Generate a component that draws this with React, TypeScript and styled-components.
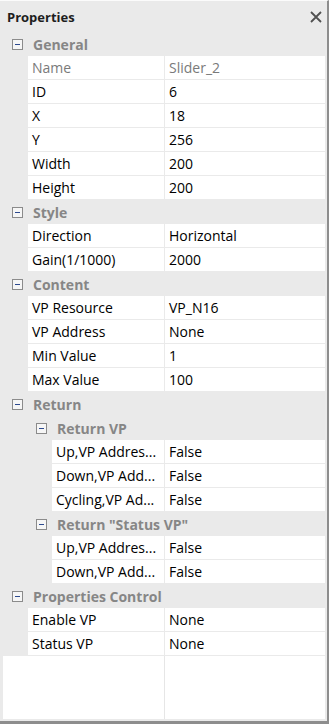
import React from 'react';
import styled, { createGlobalStyle } from 'styled-components';

const GlobalStyle = createGlobalStyle`
  html, body {
    margin: 0;
    padding: 0;
    background: #eaeaea;
  }
  * {
    box-sizing: border-box;
  }
`;

const FONT = `"Open Sans", "Noto Sans", "DejaVu Sans", sans-serif`;

const Panel = styled.div`
  width: 329px;
  height: 724px;
  display: flex;
  flex-direction: column;
  background: #eaeaea;
  border-top: 1px solid #fbfbfb;
  border-right: 2px solid #8d8d8d;
  border-bottom: 3px solid #8d8d8d;
  font-family: ${FONT};
  overflow: hidden;
`;

const TitleBar = styled.div`
  height: 31px;
  flex: none;
  display: flex;
  align-items: center;
  justify-content: space-between;
  padding: 0 3px 0 7px;
`;

const Title = styled.span`
  font-size: 13px;
  font-weight: 700;
  color: #1e1e1e;
`;

const CloseButton = styled.button`
  width: 16px;
  height: 16px;
  padding: 0;
  border: none;
  background: none;
  display: flex;
  align-items: center;
  justify-content: center;
`;

const Grid = styled.div`
  flex: 1;
  display: flex;
  flex-direction: column;
  margin: 0 2px 2px 3px;
  background: #ffffff;
`;

const CategoryRow = styled.div<{ $indent: number }>`
  height: 24px;
  flex: none;
  display: flex;
  align-items: center;
  gap: 10px;
  padding-left: ${({ $indent }) => $indent}px;
  background: #eaeaea;
  font-size: 14px;
  font-weight: 700;
  color: #868686;
  white-space: nowrap;
`;

const Toggle = styled.span`
  width: 11px;
  height: 11px;
  flex: none;
  border: 1px solid #8b8b8b;
  background: #f6f6f6;
  display: flex;
  align-items: center;
  justify-content: center;

  &::after {
    content: '';
    width: 5px;
    height: 1px;
    background: #2d4a8f;
  }
`;

const PropRow = styled.div<{ $indent: number }>`
  height: 24px;
  flex: none;
  display: flex;
  gap: 1px;
  padding-left: ${({ $indent }) => $indent}px;
  padding-bottom: 1px;
  background: #eaeaea;
`;

const Cell = styled.div<{ $muted?: boolean }>`
  background: #ffffff;
  display: flex;
  align-items: center;
  padding-left: 4px;
  font-size: 14px;
  color: ${({ $muted }) => ($muted ? '#7a7a7a' : '#000000')};
  white-space: nowrap;
  overflow: hidden;
`;

const LabelCell = styled(Cell)`
  flex: 1;
  min-width: 0;
`;

const ValueCell = styled(Cell)`
  width: 160px;
  flex: none;
`;

const Filler = styled.div`
  flex: 1;
  display: flex;
`;

const FillerLabel = styled.div`
  width: 162px;
  border-right: 1px solid #e6e6e6;
`;

type Prop = { label: string; value: string; muted?: boolean };
type Section = { title: string; level: number; props?: Prop[]; children?: Section[] };

const sections: Section[] = [
  {
    title: 'General',
    level: 0,
    props: [
      { label: 'Name', value: 'Slider_2', muted: true },
      { label: 'ID', value: '6' },
      { label: 'X', value: '18' },
      { label: 'Y', value: '256' },
      { label: 'Width', value: '200' },
      { label: 'Height', value: '200' },
    ],
  },
  {
    title: 'Style',
    level: 0,
    props: [
      { label: 'Direction', value: 'Horizontal' },
      { label: 'Gain(1/1000)', value: '2000' },
    ],
  },
  {
    title: 'Content',
    level: 0,
    props: [
      { label: 'VP Resource', value: 'VP_N16' },
      { label: 'VP Address', value: 'None' },
      { label: 'Min Value', value: '1' },
      { label: 'Max Value', value: '100' },
    ],
  },
  {
    title: 'Return',
    level: 0,
    children: [
      {
        title: 'Return VP',
        level: 1,
        props: [
          { label: 'Up,VP Addres...', value: 'False' },
          { label: 'Down,VP Add...', value: 'False' },
          { label: 'Cycling,VP Ad...', value: 'False' },
        ],
      },
      {
        title: 'Return "Status VP"',
        level: 1,
        props: [
          { label: 'Up,VP Addres...', value: 'False' },
          { label: 'Down,VP Add...', value: 'False' },
        ],
      },
    ],
  },
  {
    title: 'Properties Control',
    level: 0,
    props: [
      { label: 'Enable VP', value: 'None' },
      { label: 'Status VP', value: 'None' },
    ],
  },
];

const renderSection = (s: Section): React.ReactNode => (
  <React.Fragment key={s.title}>
    <CategoryRow $indent={9 + s.level * 24}>
      <Toggle />
      {s.title}
    </CategoryRow>
    {s.props?.map((p, i) => (
      <PropRow key={i} $indent={25 + s.level * 24}>
        <LabelCell $muted={p.muted}>{p.label}</LabelCell>
        <ValueCell $muted={p.muted}>{p.value}</ValueCell>
      </PropRow>
    ))}
    {s.children?.map(renderSection)}
  </React.Fragment>
);

export default function App() {
  return (
    <>
      <GlobalStyle />
      <Panel>
        <TitleBar>
          <Title>Properties</Title>
          <CloseButton aria-label="Close">
            <svg width="12" height="12" viewBox="0 0 12 12">
              <path d="M1 1 L11 11 M11 1 L1 11" stroke="#505050" strokeWidth="1.8" />
            </svg>
          </CloseButton>
        </TitleBar>
        <Grid>
          {sections.map(renderSection)}
          <Filler>
            <FillerLabel />
          </Filler>
        </Grid>
      </Panel>
    </>
  );
}
